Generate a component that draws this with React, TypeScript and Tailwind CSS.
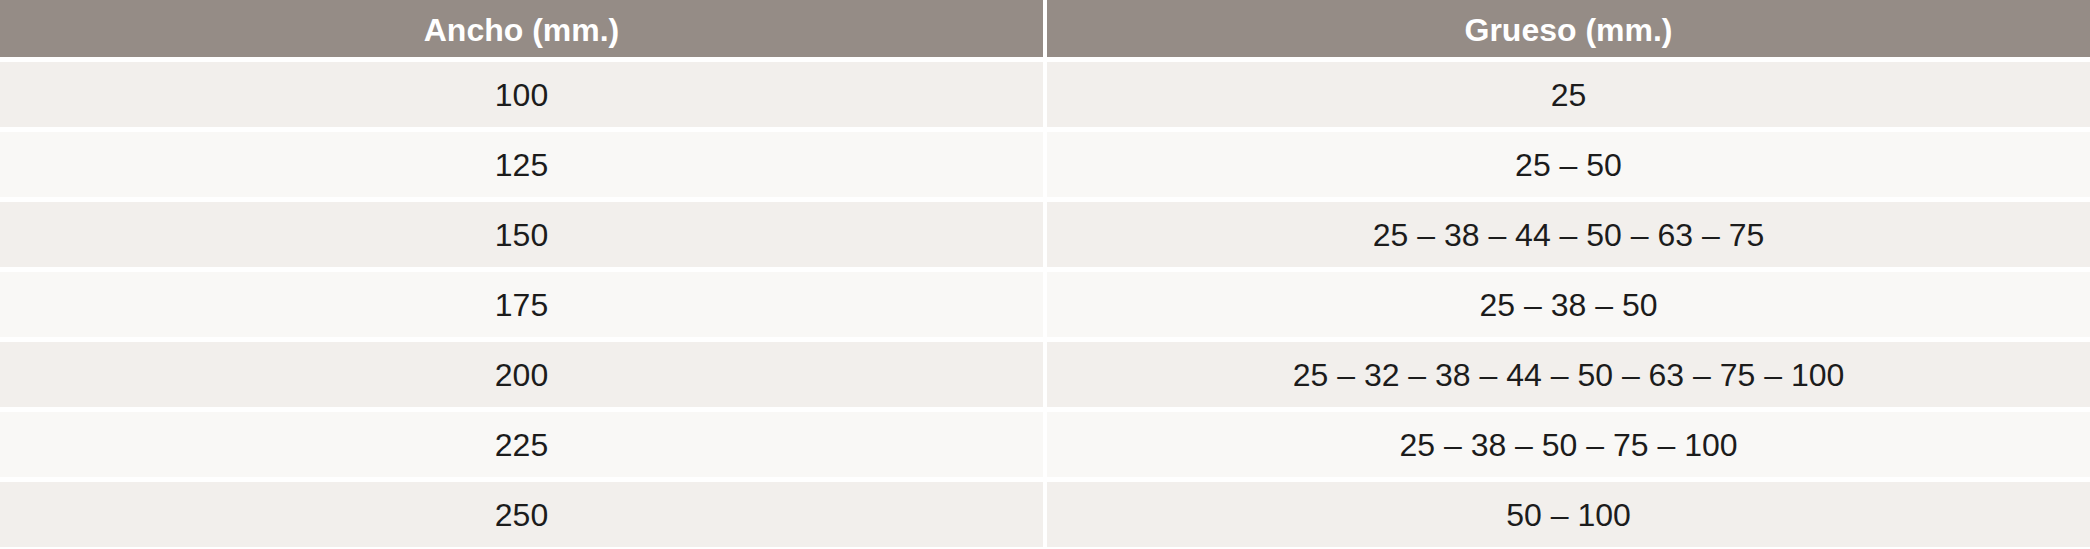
import React from "react";

const rows: [string, string][] = [
  ["100", "25"],
  ["125", "25 – 50"],
  ["150", "25 – 38 – 44 – 50 – 63 – 75"],
  ["175", "25 – 38 – 50"],
  ["200", "25 – 32 – 38 – 44 – 50 – 63 – 75 – 100"],
  ["225", "25 – 38 – 50 – 75 – 100"],
  ["250", "50 – 100"],
];

export default function App() {
  return (
    <div
      className="w-[2090px] h-[549px] bg-white overflow-hidden"
      style={{ fontFamily: '"Liberation Sans", Arial, Helvetica, sans-serif' }}
    >
      <div className="grid grid-cols-2 gap-x-[4px] gap-y-[5px]">
        <div className="h-[57px] bg-[#958c86] text-white font-bold text-[32px] flex items-center justify-center pt-[2px]">
          Ancho (mm.)
        </div>
        <div className="h-[57px] bg-[#958c86] text-white font-bold text-[32px] flex items-center justify-center pt-[2px]">
          Grueso (mm.)
        </div>
        {rows.map(([a, b], i) => {
          const bg = i % 2 === 0 ? "bg-[#f2efec]" : "bg-[#f9f8f6]";
          return (
            <React.Fragment key={a}>
              <div
                className={`h-[65px] ${bg} text-[#1c1c1c] text-[32px] flex items-center justify-center`}
              >
                {a}
              </div>
              <div
                className={`h-[65px] ${bg} text-[#1c1c1c] text-[32px] flex items-center justify-center`}
              >
                {b}
              </div>
            </React.Fragment>
          );
        })}
      </div>
    </div>
  );
}
